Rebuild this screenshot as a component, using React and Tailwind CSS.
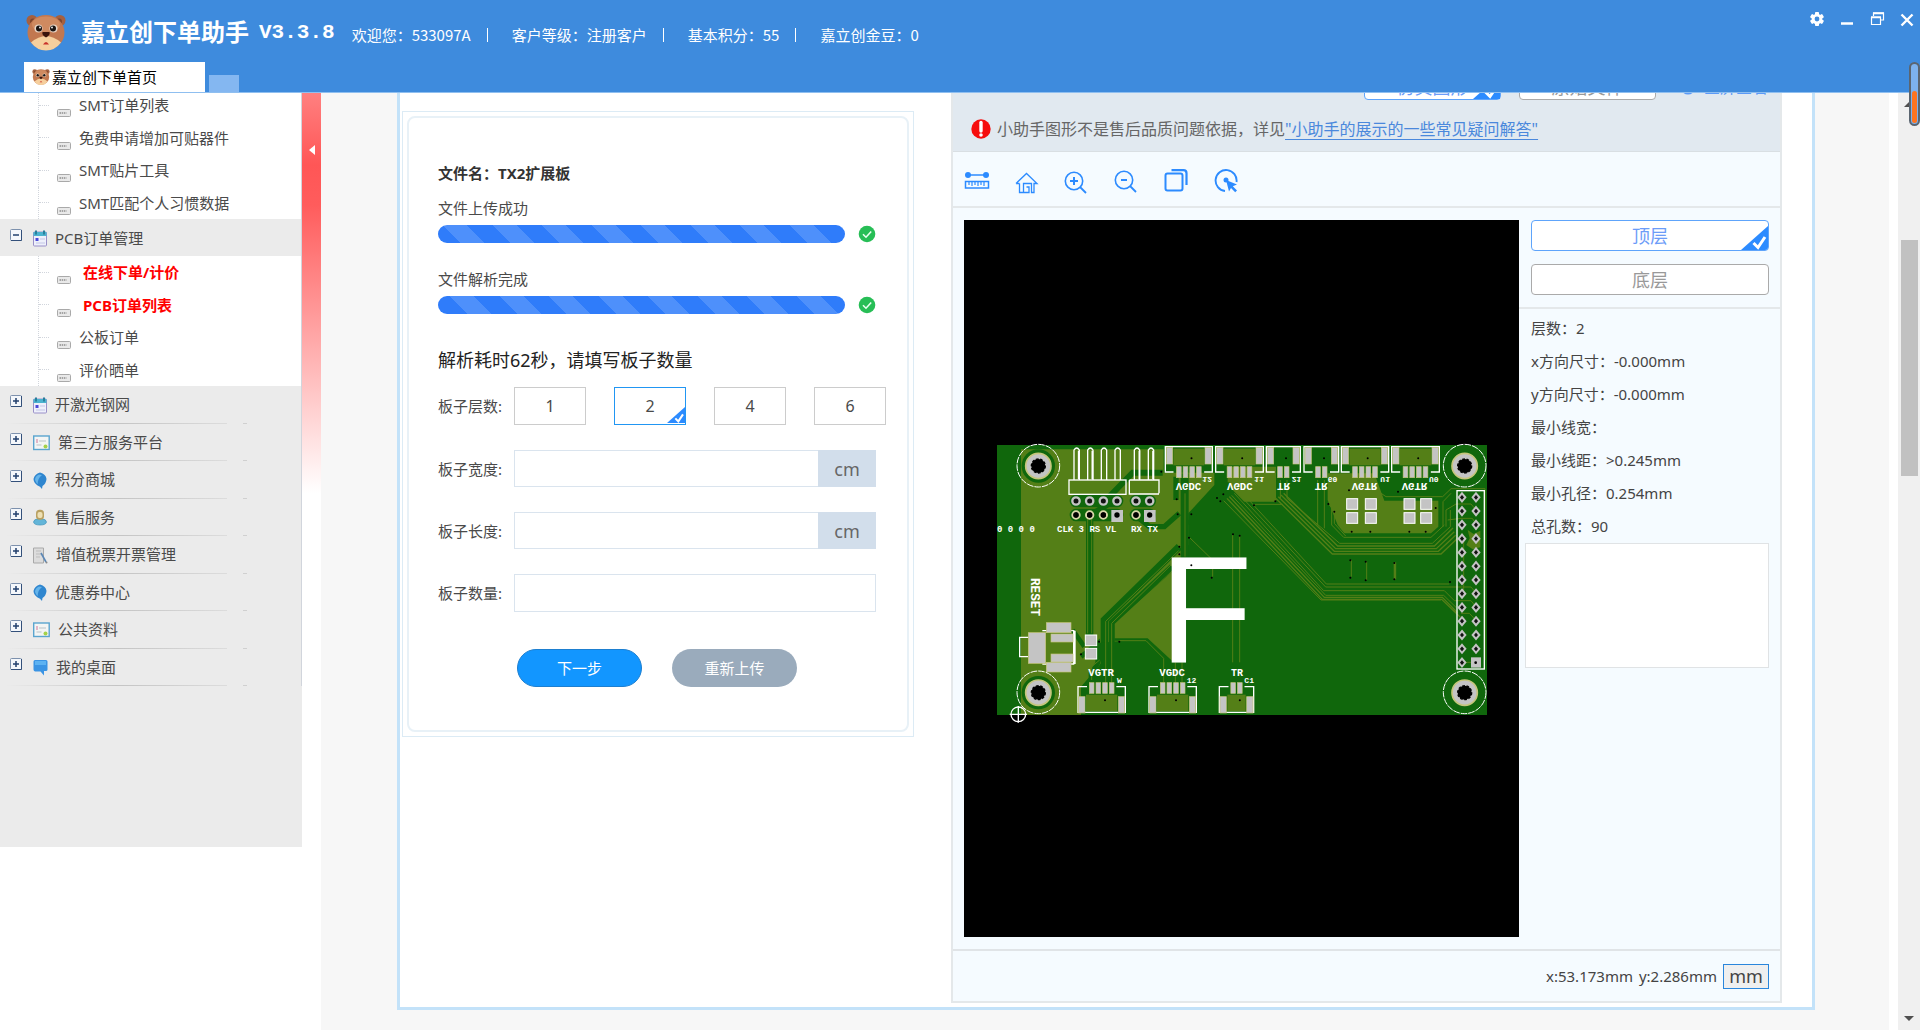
import { useState } from 'react'
import clsx from 'clsx'

const smtItems = ['SMT订单列表', '免费申请增加可贴器件', 'SMT贴片工具', 'SMT匹配个人习惯数据']

const pcbItems = [
  { text: '在线下单/计价', hot: true },
  { text: 'PCB订单列表', hot: true },
  { text: '公板订单' },
  { text: '评价晒单' },
]

const groups = [
  { text: '开激光钢网', icon: 'note' },
  { text: '第三方服务平台', icon: 'card' },
  { text: '积分商城', icon: 'ball' },
  { text: '售后服务', icon: 'user' },
  { text: '增值税票开票管理', icon: 'doc' },
  { text: '优惠券中心', icon: 'ball' },
  { text: '公共资料', icon: 'card' },
  { text: '我的桌面', icon: 'chat' },
]

const userInfo = ['欢迎您：533097A', '客户等级：注册客户', '基本积分：55', '嘉立创金豆：0']

const boardInfo = [
  ['层数：', '2'],
  ['x方向尺寸：', '-0.000mm'],
  ['y方向尺寸：', '-0.000mm'],
  ['最小线宽：', ''],
  ['最小线距：', '>0.245mm'],
  ['最小孔径：', '0.254mm'],
  ['总孔数：', '90'],
]

function Bear({ className }) {
  return (
    <svg viewBox="0 0 40 36" className={className} aria-hidden="true">
      <circle cx="6" cy="6" r="5.5" fill="#a5603f" />
      <circle cx="34" cy="6" r="5.5" fill="#a5603f" />
      <circle cx="7" cy="7" r="3" fill="#7e452c" />
      <circle cx="33" cy="7" r="3" fill="#7e452c" />
      <ellipse cx="20" cy="18" rx="18.5" ry="17.5" fill="#c27850" />
      <ellipse cx="20" cy="10" rx="14" ry="8" fill="#cf8a60" />
      <path d="M5 28 Q20 15 35 28 Q29 36 20 36 Q11 36 5 28Z" fill="#f6cf9d" />
      <circle cx="12.5" cy="14" r="4" fill="#e9d7c8" />
      <circle cx="27.5" cy="14" r="4" fill="#e9d7c8" />
      <circle cx="13" cy="14" r="3" fill="#1b1412" />
      <circle cx="27" cy="14" r="3" fill="#1b1412" />
      <circle cx="14" cy="13" r="0.9" fill="#fff" />
      <circle cx="26" cy="13" r="0.9" fill="#fff" />
      <path d="M16.500 17.500h7q1 3-3.500 5.500q-4.500-2.500-3.500-5.500Z" fill="#3a140c" />
      <path d="M17 30q3-5 6 0Z" fill="#c8302a" />
    </svg>
  )
}

function GroupIcon({ name }) {
  if (name === 'note') {
    return (
      <svg viewBox="0 0 14 17" className="w-3.5 h-[17px]" aria-hidden="true">
        <rect x="0.500" y="2" width="13" height="14" rx="1" fill="#eef0fb" stroke="#9a90c8" />
        <rect x="0.500" y="2" width="13" height="4" fill="#4bb3cf" />
        <path d="M3 0.500v4M11 0.500v4" stroke="#2a7f9c" strokeWidth="2" />
        <rect x="2.500" y="8" width="3" height="3" fill="#4b4ad8" />
        <path d="M7 9h5M3 13h9" stroke="#c3c6e6" />
      </svg>
    )
  }
  if (name === 'card') {
    return (
      <svg viewBox="0 0 17 16" className="w-[17px] h-4" aria-hidden="true">
        <rect x="0.700" y="1" width="15.500" height="13.500" fill="#f3f5f4" stroke="#5aa5cf" strokeWidth="1.400" />
        <path d="M4 4v4" stroke="#d58aa8" strokeWidth="1.200" />
        <path d="M6 6h7M3.500 10h5" stroke="#b9c3c8" />
        <circle cx="12.500" cy="11.500" r="2" fill="#a4d24a" />
      </svg>
    )
  }
  if (name === 'ball') {
    return (
      <svg viewBox="0 0 14 17" className="w-3.5 h-[17px]" aria-hidden="true">
        <path d="M7 0.500Q13 2 13.500 7Q13 12 9.500 14L9 17L7 14.800Q0.500 12 0.500 7Q1.500 2 7 0.500Z" fill="#2f86cf" />
        <path d="M6 2.500Q2 4 2 8Q3 11 5 12Q4 7 9 3Z" fill="#65b4ea" />
      </svg>
    )
  }
  if (name === 'user') {
    return (
      <svg viewBox="0 0 14 17" className="w-3.5 h-[17px]" aria-hidden="true">
        <path d="M0.500 13Q1 10 5 10h4q4 0 4.500 3Q13 16 7 16T0.500 13Z" fill="#63b5d8" stroke="#3f93bb" strokeWidth="0.700" />
        <rect x="3" y="0.800" width="8" height="10" rx="3.500" fill="#b9a162" />
        <rect x="4.500" y="3" width="5" height="6" rx="2" fill="#eee0b4" />
      </svg>
    )
  }
  if (name === 'doc') {
    return (
      <svg viewBox="0 0 15 17" className="w-[15px] h-[17px]" aria-hidden="true">
        <path d="M0.500 1h10v15h-10z" fill="#dcdcdc" stroke="#a9a9a9" />
        <path d="M3 4h5M3 7h5M3 10h4" stroke="#bdbdbd" />
        <path d="M8 6l5 9" stroke="#5b87b5" strokeWidth="1.600" />
        <circle cx="13.500" cy="15.500" r="1" fill="#888" />
      </svg>
    )
  }
  return (
    <svg viewBox="0 0 15 17" className="w-[15px] h-[17px]" aria-hidden="true">
      <path d="M2 1h11q1.500 0 1.500 1.500v8q0 1.500-1.500 1.500h-2v4.500L7.500 12.500H2Q0.500 12 0.500 10.500v-8Q0.500 1 2 1Z" fill="#3a94e4" />
      <path d="M2 2h11v4H2z" fill="#5cb2f2" />
    </svg>
  )
}

function Toggle({ open, label }) {
  return (
    <button aria-label={label} className="shrink-0 mb-1.5">
      <svg viewBox="0 0 12 12" className="block size-3" aria-hidden="true">
        <rect x="0.500" y="0.500" width="11" height="11" rx="1" fill="#f4f7fb" stroke="#7d91ad" />
        <path d="M11.500 1v10.500H1" fill="none" stroke="#33507a" />
        <path d={open ? 'M3 6h6' : 'M3 6h6M6 3v6'} stroke="#22406e" strokeWidth="1.500" />
      </svg>
    </button>
  )
}

function SubItem({ text, hot }) {
  return (
    <li className="flex items-center border-l border-dotted border-gray-300 ml-[38px]">
      <span className="w-2.5 border-t border-dotted border-gray-300" />
      <svg viewBox="0 0 14 8" className="w-3.5 h-2 ml-2 mt-4" aria-hidden="true">
        <rect x="0.500" y="0.500" width="13" height="7" rx="1" fill="#e9e9e9" stroke="#a9a9a9" />
        <path d="M2.500 4h7" stroke="#8d8d8d" strokeWidth="1.500" strokeDasharray="1.500 0.700" />
      </svg>
      <a href="#" className={clsx('whitespace-nowrap', hot ? 'ml-3 font-bold text-[#ff0000]' : 'ml-2 text-[#4a4a4a]')}>
        {text}
      </a>
    </li>
  )
}

function Sidebar() {
  return (
    <aside className="w-[302px] shrink-0 self-start bg-[#ebebeb] text-[15px] leading-5 pb-[161px]">
      <div className="h-[126px] flex items-end overflow-hidden bg-white border-r border-gray-300">
        <ul className="w-full h-[130px] shrink-0 grid auto-rows-fr">
          {smtItems.map((text) => <SubItem key={text} text={text} />)}
        </ul>
      </div>
      <div className="h-[37px] flex items-center pl-2.5 border-r border-gray-300 text-[#4a4a4a]">
        <Toggle open label="PCB订单管理" />
        <span className="ml-[11px] mt-0.5"><GroupIcon name="note" /></span>
        <span className="ml-2">PCB订单管理</span>
      </div>
      <ul className="h-[130px] grid auto-rows-fr bg-white border-r border-gray-300">
        {pcbItems.map((item) => <SubItem key={item.text} {...item} />)}
      </ul>
      <ul className="h-[300px] grid auto-rows-fr border-r border-gray-300 text-[#4a4a4a]">
        {groups.map((g) => (
          <li key={g.text} className="flex flex-col">
            <div className="grow flex items-center pl-2.5">
              <Toggle label={g.text} />
              <span className="ml-[11px] mt-0.5"><GroupIcon name={g.icon} /></span>
              <span className="ml-2">{g.text}</span>
            </div>
            <div className="flex gap-4 pl-1.5">
              <span className="w-[221px] h-px bg-gradient-to-r from-transparent via-[#c4c4c4] to-[#dcdcdc]" />
              <span className="w-1 h-px bg-[#d0d0d0]" />
            </div>
          </li>
        ))}
      </ul>
    </aside>
  )
}

function Header() {
  return (
    <header className="h-[93px] shrink-0 flex flex-col bg-[#3e8bdd] border-b border-[#8fbff0] text-white">
      <div className="h-[62px] flex items-start">
        <Bear className="w-10 h-[37px] ml-[26px] mt-[14px]" />
        <h1 className="flex ml-[15px] mt-[17px] gap-2.5 text-[24px] leading-8 font-bold font-['Liberation_Serif','Noto_Sans_CJK_SC',serif] whitespace-nowrap">
          嘉立创下单助手 <span className="text-[21px] font-['Liberation_Mono',monospace]">V3.3.8</span>
        </h1>
        <ul className="flex ml-[17px] mt-[25px] text-[15px] leading-5 font-['Noto_Sans_CJK_SC',sans-serif]">
          {userInfo.map((text, i) => (
            <li key={text} className="flex items-center whitespace-nowrap">
              {i > 0 && <span className="w-px h-3.5 bg-white ml-4 mr-6" />}
              {text}
            </li>
          ))}
        </ul>
        <div className="ml-auto mr-[5px] mt-[11px] flex gap-3.5">
          <button aria-label="设置" className="size-4">
            <svg viewBox="0 0 16 16" className="size-4" aria-hidden="true">
              <g fill="#fff">
                <rect x="6" y="1" width="4" height="14" rx="0.800" />
                <rect x="6" y="1" width="4" height="14" rx="0.800" transform="rotate(60 8 8)" />
                <rect x="6" y="1" width="4" height="14" rx="0.800" transform="rotate(120 8 8)" />
                <circle cx="8" cy="8" r="5.300" />
              </g>
              <circle cx="8" cy="8" r="2.400" fill="#3e8bdd" />
            </svg>
          </button>
          <button aria-label="最小化" className="size-4">
            <svg viewBox="0 0 16 16" className="size-4" aria-hidden="true"><path d="M2 12.500h12" stroke="#fff" strokeWidth="2.500" /></svg>
          </button>
          <button aria-label="还原" className="size-4">
            <svg viewBox="0 0 16 16" className="size-4" fill="none" stroke="#fff" aria-hidden="true">
              <path d="M4.500 5V2h10v7h-3" strokeWidth="1.200" />
              <path d="M4 2.300h11M2 6.300h10" strokeWidth="2" />
              <path d="M2.500 6v7.500h9V6" strokeWidth="1.200" />
            </svg>
          </button>
          <button aria-label="关闭" className="size-4">
            <svg viewBox="0 0 16 16" className="size-4" aria-hidden="true"><path d="M2.500 3.500l11 11M13.500 3.500l-11 11" stroke="#fff" strokeWidth="2.400" /></svg>
          </button>
        </div>
      </div>
      <nav className="flex items-end pl-6 gap-1">
        <a href="#" className="w-[181px] h-[30px] flex items-center pl-2 bg-white text-black text-[15px] leading-5 whitespace-nowrap">
          <Bear className="w-[18px] h-4 shrink-0" />
          <span className="ml-0.5">嘉立创下单首页</span>
        </a>
        <button aria-label="新标签页" className="w-[30px] h-[17px] bg-[#84b7f1]" />
      </nav>
    </header>
  )
}

function Progress({ text, stripes }) {
  return (
    <div>
      <p>{text}</p>
      <div className="flex items-center gap-[13px] mt-[7px]">
        <div role="progressbar" aria-label={text} aria-valuenow={100} className={clsx('w-[407px] h-[18px] rounded-full', stripes)} />
        <svg viewBox="0 0 18 18" className="size-[18px] shrink-0" aria-hidden="true">
          <circle cx="9" cy="9" r="8.300" fill="#27be56" />
          <path d="M5 9.200l3 3 5.200-5.700" fill="none" stroke="#e9fff0" strokeWidth="1.600" />
        </svg>
      </div>
    </div>
  )
}

// синий уголок с галочкой у выбранной кнопки
function Corner({ className }) {
  return (
    <svg viewBox="0 0 27 24" className={clsx('absolute right-0 bottom-0', className)} aria-hidden="true">
      <path d="M27 0v24H0Z" fill="#2c8bff" />
      <path d="M12.500 17l4.500 4.500L24 11" fill="none" stroke="#fff" strokeWidth="3" />
    </svg>
  )
}

function UploadForm() {
  const [layers, setLayers] = useState(2)

  return (
    <section className="w-[512px] shrink-0 self-start mt-[18px] border border-[#dcebf5] p-1">
      <form
        className="border-2 border-[#e8f1f7] rounded-lg pt-[45px] pl-[29px] pb-[43px] text-[15px] leading-5 text-[#4a4a4a]"
        onSubmit={(e) => e.preventDefault()}
      >
        <p className="font-bold text-[#333]">文件名：TX2扩展板</p>
        <div className="mt-[15px] flex flex-col gap-[26px]">
          <Progress text="文件上传成功" stripes="bg-[repeating-linear-gradient(45deg,#2f7cfa_0_16px,#4e90fb_16px_33px,#2f7cfa_33px_35px)]" />
          <Progress text="文件解析完成" stripes="bg-[repeating-linear-gradient(45deg,#4e90fb_0_3px,#2f7cfa_3px_21px,#4e90fb_21px_35px)]" />
        </div>
        <p className="mt-[34px] text-lg leading-6 text-[#222]">解析耗时62秒，请填写板子数量</p>
        <div className="mt-[15px] flex items-center" role="group" aria-label="板子层数">
          <span className="w-[76px] whitespace-nowrap">板子层数:</span>
          <div className="flex gap-7">
            {[1, 2, 4, 6].map((n) => (
              <button
                key={n}
                type="button"
                aria-pressed={layers === n}
                onClick={() => setLayers(n)}
                className={clsx('relative w-[72px] h-[38px] border bg-white text-base', layers === n ? 'border-[#2196f3]' : 'border-[#ccc]')}
              >
                {n}
                {layers === n && <Corner className="w-[18px] h-[18px]" />}
              </button>
            ))}
          </div>
        </div>
        <div className="mt-[25px] flex flex-col gap-[25px]">
          {[['width', '板子宽度:'], ['length', '板子长度:']].map(([id, label]) => (
            <div key={id} className="flex items-center">
              <label htmlFor={id} className="w-[76px]">{label}</label>
              <input id={id} className="w-[304px] h-[37px] px-2 border border-r-0 border-[#dae4ee] bg-white" />
              <span className="w-[58px] h-[37px] flex items-center justify-center bg-[#d2deeb] text-lg text-[#666]">cm</span>
            </div>
          ))}
          <div className="flex items-center">
            <label htmlFor="count" className="w-[76px]">板子数量:</label>
            <input id="count" className="w-[362px] h-[38px] px-2 border border-[#dae4ee] bg-white" />
          </div>
        </div>
        <div className="mt-[37px] ml-[79px] flex gap-[30px] text-white">
          <button className="w-[125px] h-[38px] rounded-full bg-[#1296ff] border border-[#1d7fd0]">下一步</button>
          <button type="button" className="w-[125px] h-[38px] rounded-full bg-[#9aabbc]">重新上传</button>
        </div>
      </form>
    </section>
  )
}

const range = (n) => Array.from({ length: n }, (_, i) => i)

// разъём у верхнего края платы
function TopConnector({ x, w, pads, pour }) {
  const start = x + w / 2 - (pads * 20) / 2
  return (
    <g>
      {pour && <rect x={x + 24} y="56" width={w - 48} height="50" fill="#547f17" />}
      <path d={`M${start - 6} 126H${x}V50H${x + w}V126H${start + pads * 20 + 6}`} fill="none" stroke="#fff" strokeWidth="4" />
      <rect x={x + 3} y="52" width="19" height="50" fill="#c4c4c4" stroke="#c6c67c" strokeWidth="2" />
      <rect x={x + w - 22} y="52" width="19" height="50" fill="#c4c4c4" stroke="#c6c67c" strokeWidth="2" />
      {range(pads).map((i) => (
        <rect key={i} x={start + i * 20 + 3} y="110" width="14" height="33" fill="#c4c4c4" stroke="#c6c67c" strokeWidth="2" />
      ))}
      <circle cx={x + w / 2 + 8} cy="85" r="3" fill="#000" />
    </g>
  )
}

function BottomConnector({ x, w, pads }) {
  const start = x + w / 2 - pads * 10
  return (
    <g>
      <rect x={x + 24} y="794" width={w - 48} height="50" fill="#547f17" />
      <path d={`M${start - 4} 770H${x}V847H${x + w}V770H${start + pads * 20 + 4}`} fill="none" stroke="#fff" strokeWidth="4" />
      <rect x={x + 2} y="800" width="19" height="49" fill="#c4c4c4" stroke="#c6c67c" strokeWidth="2" />
      <rect x={x + w - 21} y="800" width="19" height="49" fill="#c4c4c4" stroke="#c6c67c" strokeWidth="2" />
      {range(pads).map((i) => (
        <rect key={i} x={start + i * 20 + 3} y="758" width="14" height="32" fill="#c4c4c4" stroke="#c6c67c" strokeWidth="2" />
      ))}
      <circle cx={x + w / 2 + 10} cy="811" r="3" fill="#000" />
    </g>
  )
}

function MountHole({ x, y }) {
  return (
    <g>
      <circle cx={x} cy={y - 1} r="64" fill="none" stroke="#fff" strokeWidth="3" strokeDasharray="20 3" />
      <circle cx={x} cy={y} r="50" fill="#10670c" />
      <circle cx={x} cy={y} r="38" fill="#c4c4c4" stroke="#c6c67c" strokeWidth="5" />
      <circle cx={x} cy={y} r="21" fill="#000" stroke="#000" strokeWidth="4" strokeDasharray="8 5" />
    </g>
  )
}

const flipped = [
  [584, 'VGDC'], [738, 'VGDC'], [888, 'TR'], [1001, 'TR'], [1112, 'VGTR'], [1262, 'VGTR'],
]

const flippedSmall = [
  [664, 142, '12'], [820, 142, '11'], [932, 142, '21'], [1040, 142, '60'], [1198, 142, 'U1'], [1344, 142, 'U0'],
]

function Board() {
  return (
    <svg viewBox="48 45 1470 810" className="w-[490px] shrink-0 overflow-visible" role="img" aria-label="PCB">
      <rect x="48" y="45" width="1470" height="810" fill="#10670c" />

      <g fill="#547f17">
        <path d="M120 58H548V128H700V165L622 250V345L600 375L548 855H120Z" />
        <path d="M740 110H885V215H790L740 165Z" />
        <path d="M1040 130H1180L1210 212H1372V290L1350 310H1090L1070 285L1040 210Z" />
        <path d="M1460 300L1478 312L1498 302V352L1475 358L1456 345L1466 325Z" />
      </g>

      {/* тёмные участки поверх заливки */}
      <path d="M745 165L622 285V400L573 420V855H430V632H400V575L573 425L622 365V270L735 165Z" fill="#10670c" />
      <path d="M573 425L400 578V625H500L573 692Z" fill="#547f17" />
      <g fill="none" stroke="#10670c">
        <path d="M595 350L370 570V760" strokeWidth="22" />
        <path d="M573 410L392 578V760" strokeWidth="18" />
        <path d="M326 265V615" strokeWidth="22" />
        <path d="M611 130V380" strokeWidth="24" />
        <path d="M545 128H455L385 200V220L330 255" strokeWidth="18" />
        <path d="M585 140V210M475 265L505 290H550L595 250" strokeWidth="16" />
        <path d="M640 250L725 165H745" strokeWidth="16" />
        <path d="M275 600L310 650M300 680L350 640V700L330 730V760" strokeWidth="14" />
      </g>
      <path d="M285 213H408M285 255H408M465 213H506M465 255H506" stroke="#10670c" strokeWidth="38" strokeLinecap="round" />
      <path d="M340 640L430 632H495L548 685V855H300V770L360 700Z" fill="#10670c" />

      {/* дорожки */}
      <g fill="none" stroke="#547f17" strokeWidth="3">
        <path d="M593 362L374 574V758M590 385L392 580V758M320 265V610M332 265V610M612 190V380" />
        <path d="M415 632H495L548 685V758M583 697V758M603 697V758M332 750V710L356 690" />
        <path d="M755 315V697M776 315V697M625 322L695 390V440" />
        <path d="M738 205L1024 508H1382L1438 562M745 200L1030 502H1384L1430 548" strokeWidth="4" />
        <path d="M728 212L1020 510H1380M752 196L1034 496H1388L1425 532M760 190L1028 482H1390L1420 512H1470L1484 530M768 186L1034 471H1470L1486 490M776 180L1036 462H1405" />
        <path d="M884 205L1054 372H1380L1430 325M892 200L1060 364H1372L1424 316M900 195L1064 356H1366L1420 305M908 190L1070 348H1360L1416 294" strokeWidth="4" />
        <path d="M820 223H905M918 150V205L1076 340H1354L1408 290V240M898 150V205" />
        <path d="M1010 150V285M1030 150V295M1042 222L1052 232V285L1088 322H1350L1390 285M1060 245V280L1094 318" />
        <path d="M1186 180L1215 200H1385L1410 176H1512V690M1386 290V215L1410 190M1395 290V240L1425 222H1470L1485 240M1400 270L1440 265H1474L1484 280" />
        <path d="M1111 390V440M1157 395V450M1240 397V448M1448 330V480M1440 550H1465L1484 570M1440 697H1470" />
      </g>
      <path d="M1242 397V448" stroke="#547f17" strokeWidth="7" />
      <g fill="#000">
        {[[595, 350], [595, 373], [631, 253], [590, 253], [587, 208], [541, 125], [354, 635], [415, 635], [300, 673], [692, 443], [756, 313], [776, 317], [624, 323], [708, 204], [718, 214], [727, 193], [819, 226], [883, 214], [1042, 222], [1060, 245], [1251, 185], [1104, 181], [1108, 391], [1108, 443], [1154, 395], [1154, 451], [1240, 399], [1240, 448], [1112, 305], [1168, 305], [1285, 305], [1334, 305], [1364, 234], [1407, 456]].map(([x, y]) => (
          <circle key={`${x}-${y}`} cx={x} cy={y} r="3" />
        ))}
      </g>

      {/* штыревые разъёмы */}
      <g fill="none" stroke="#fff" strokeWidth="4">
        <rect x="264" y="150" width="171" height="43" />
        <path d="M445 150H534V190M445 150V192H534" />
        {[287, 328, 369, 410, 468, 510].map((x) => (
          <path key={x} d={`M${x - 8} 150V60Q${x} 48 ${x + 8} 60V150`} />
        ))}
        <path d="M293 62V148M334 62V148M475 62V148M516 62V148" strokeWidth="5" />
      </g>
      {[285, 326, 367, 408, 465, 506].map((x) => (
        <g key={x}>
          <circle cx={x} cy="213" r="11" fill="#111" stroke="#c4c4c4" strokeWidth="7" />
          {x === 408 || x === 506
            ? <rect x={x - 17} y="240" width="35" height="36" fill="#c4c4c4" />
            : <circle cx={x} cy="255" r="11" fill="#111" stroke="#d8d8a8" strokeWidth="6" />}
          <circle cx={x} cy="255" r="8" fill="#000" />
        </g>
      ))}

      <TopConnector x={553} w={141} pads={4} pour />
      <TopConnector x={704} w={143} pads={4} pour />
      <TopConnector x={856} w={102} pads={2} />
      <TopConnector x={969} w={104} pads={2} />
      <TopConnector x={1081} w={142} pads={4} pour />
      <TopConnector x={1232} w={143} pads={4} pour />
      <BottomConnector x={291} w={142} pads={4} />
      <BottomConnector x={504} w={142} pads={4} />
      <BottomConnector x={715} w={103} pads={2} />

      {/* резисторы и кнопка сброса */}
      {[1112, 1168, 1284, 1334].map((x) => (
        <g key={x} fill="#c4c4c4" stroke="#fff" strokeWidth="3">
          <rect x={x - 15} y="206" width="33" height="32" />
          <rect x={x - 15} y="248" width="33" height="32" />
        </g>
      ))}
      <g fill="#c4c4c4" stroke="#fff" strokeWidth="3">
        <rect x="313" y="615" width="34" height="32" />
        <rect x="313" y="655" width="34" height="32" />
      </g>
      <g fill="none" stroke="#fff" strokeWidth="4">
        <path d="M142 622H116V680H142M184 602H280M184 702H280" />
        <path d="M280 602V702" strokeWidth="8" />
      </g>
      <g fill="#c4c4c4" stroke="#c6c67c" strokeWidth="2">
        <rect x="142" y="608" width="52" height="92" />
        <rect x="196" y="578" width="74" height="30" />
        <rect x="210" y="612" width="66" height="24" />
        <rect x="210" y="672" width="66" height="24" />
        <rect x="196" y="697" width="74" height="29" />
      </g>

      {/* гребёнка справа */}
      <rect x="1428" y="182" width="82" height="535" fill="none" stroke="#fff" strokeWidth="4" />
      {range(13).map((i) => (
        <g key={i}>
          <path d={`M1443 ${190 + i * 41.3}l10 12l-10 12l-10-12Z`} fill="#111" stroke="#c4c4c4" strokeWidth="6" />
          {i === 12
            ? <rect x="1470" y="682" width="30" height="31" fill="#c4c4c4" />
            : <path d={`M1485 ${190 + i * 41.3}l10 12l-10 12l-10-12Z`} fill="#111" stroke="#c4c4c4" strokeWidth="6" />}
        </g>
      ))}
      <circle cx="1484" cy="698" r="4" fill="#000" />

      <MountHole x={172} y={108} />
      <MountHole x={1451} y={108} />
      <MountHole x={172} y={788} />
      <MountHole x={1451} y={788} />

      {/* шелкография */}
      <g fill="#fff" className="font-['Liberation_Mono',monospace]" fontWeight="bold">
        {flipped.map(([x, t]) => (
          <text key={x} fontSize="32" transform={`translate(${x} 160) scale(1 -1)`}>{t}</text>
        ))}
        {flippedSmall.map(([x, y, t]) => (
          <text key={x} fontSize="24" transform={`translate(${x} ${y}) scale(1 -1)`}>{t}</text>
        ))}
        <text x="322" y="738" fontSize="32">VGTR</text>
        <text x="535" y="738" fontSize="32">VGDC</text>
        <text x="750" y="738" fontSize="30">TR</text>
        <text x="408" y="760" fontSize="24">W</text>
        <text x="617" y="760" fontSize="24">12</text>
        <text x="790" y="760" fontSize="24">C1</text>
        <text fontSize="38" transform="translate(150 444) rotate(90)">RESET</text>
        <text x="48" y="306" fontSize="27">0 0 0 0</text>
        <text x="228" y="306" fontSize="27">CLK 3 RS VL</text>
        <text x="450" y="306" fontSize="27">RX TX</text>
      </g>

      <text x="535" y="697" fontSize="458" fill="#fff" className="font-['Liberation_Sans',sans-serif]">F</text>
      <circle cx="631" cy="406" r="3" fill="#000" />
      <g fill="none" stroke="#fff" strokeWidth="4">
        <circle cx="112" cy="853" r="22" />
        <path d="M86 853H138M112 828V878" />
      </g>
    </svg>
  )
}

const tools = [
  ['测量', (
    <>
      <path d="M4 6h18" strokeWidth="1.500" />
      <circle cx="4" cy="6" r="3" fill="currentColor" stroke="none" />
      <circle cx="22" cy="6" r="3" fill="currentColor" stroke="none" />
      <path d="M1.500 12.500h23v6.500h-23z" strokeWidth="1.500" />
      <path d="M5 13v3M8 13v4M11 13v3M14 13v4M17 13v3M20 13v4" strokeWidth="1.200" />
    </>
  )],
  ['主页', (
    <path d="M2 14.500L12.500 4.500L23 14.500H20V23.500H17.500V14.500H9.500V23.500H15V18H12.500M5.500 14.500V23.500H9.500M5.500 14.500H2" strokeWidth="1.300" />
  )],
  ['放大', (
    <>
      <circle cx="10" cy="12" r="8.700" strokeWidth="1.600" />
      <path d="M16 18L22 24" strokeWidth="1.800" />
      <path d="M6 12h8M10 8v8" strokeWidth="2" />
    </>
  )],
  ['缩小', (
    <>
      <circle cx="10" cy="11" r="8.700" strokeWidth="1.600" />
      <path d="M16 17L22 23" strokeWidth="1.800" />
      <path d="M7 11h6" strokeWidth="2" />
    </>
  )],
  ['图层', (
    <>
      <rect x="1.500" y="4.500" width="17" height="17" rx="2" strokeWidth="2" />
      <path d="M7.500 1.200H19.500Q22.500 1.200 22.500 4.200V16" strokeWidth="2.200" />
    </>
  )],
  ['选择', (
    <>
      <path d="M11 22A10.500 10.500 0 1 1 22.500 13" strokeWidth="1.900" />
      <path d="M12 11l11 4.500-4.200 1.800 4.200 4.200-1.800 1.700-4.200-4.200-2 3.500Z" fill="currentColor" stroke="none" />
      <circle cx="12" cy="11" r="2.500" fill="currentColor" stroke="none" />
    </>
  )],
]

function Viewer() {
  const [side, setSide] = useState('顶层')

  return (
    <section className="grow min-w-0 flex flex-col border-2 border-t-0 border-[#e4e8ea] bg-[#f5fbff]">
      <div className="h-[59px] flex flex-col justify-end bg-[#e1e9f0] border-b border-[#d9dfe3] text-base">
        <div className="flex justify-end items-end gap-[18px] pr-3 leading-6">
          <button className="relative w-[137px] h-[31px] shrink-0 pt-1 border border-[#5ea4fb] rounded bg-white text-lg leading-6 text-[#6c9cf8]">
            仿真图形
            <Corner className="w-[27px] h-6" />
          </button>
          <button className="w-[137px] h-[31px] shrink-0 pt-1 border border-[#aaa] rounded bg-white text-lg leading-6 text-[#999]">原始文件</button>
          <a href="#" className="w-[94px] h-[31px] pt-1 flex items-center justify-end gap-2 text-[#5b9af7]">
            <svg viewBox="0 0 16 16" className="size-4" fill="none" stroke="currentColor" strokeWidth="2" aria-hidden="true">
              <circle cx="8" cy="8" r="6.500" />
              <circle cx="8" cy="8" r="2" />
            </svg>
            全屏查看
          </a>
        </div>
        <p className="h-[51px] shrink-0 flex items-center pl-[18px] pb-1.5 pt-3 whitespace-nowrap text-[#666] leading-6">
          <svg viewBox="0 0 20 20" className="size-5 mr-1.5" aria-hidden="true">
            <circle cx="10" cy="10" r="9.700" fill="#f60d0d" />
            <path d="M10 3.500v8.500" stroke="#fff" strokeWidth="3.400" strokeLinecap="round" />
            <circle cx="10" cy="16" r="1.800" fill="#fff" />
          </svg>
          小助手图形不是售后品质问题依据，详见
          <a href="#" className="text-[#4a88dc] underline underline-offset-4">"小助手的展示的一些常见疑问解答"</a>
        </p>
      </div>

      <div className="h-14 shrink-0 flex items-center gap-6 pl-[11px] pt-1.5 border-b-2 border-[#e4e8ea] text-[#2c8bff]">
        {tools.map(([label, icon]) => (
          <button key={label} aria-label={label}>
            <svg viewBox="0 0 26 26" className="block size-[26px]" fill="none" stroke="currentColor" aria-hidden="true">{icon}</svg>
          </button>
        ))}
      </div>

      <div className="flex">
        <div className="grow min-w-0 h-[717px] my-3 ml-[11px] pt-[3px] flex items-center justify-center bg-black overflow-hidden">
          <Board />
        </div>
        <div className="w-[261px] shrink-0 pt-3">
          <div className="flex flex-col gap-[13px] pl-3 pr-[11px] pb-3 border-b-2 border-[#e4e8ea]">
            {['顶层', '底层'].map((name) => (
              <button
                key={name}
                aria-pressed={side === name}
                onClick={() => setSide(name)}
                className={clsx(
                  'relative h-[31px] border rounded bg-white text-lg leading-6 overflow-hidden',
                  side === name ? 'border-[#5ea4fb] text-[#6c9cf8]' : 'border-[#aaa] text-[#999]'
                )}
              >
                {name}
                {side === name && <Corner className="w-[27px] h-6" />}
              </button>
            ))}
          </div>
          <dl className="pl-3 pt-[3px] text-[15px] text-[#444]">
            {boardInfo.map(([label, value]) => (
              <div key={label} className="h-[33px] flex items-center">
                <dt>{label}</dt>
                <dd>{value}</dd>
              </div>
            ))}
          </dl>
          <div className="pl-1.5 pr-[11px]">
            <textarea aria-label="备注" className="block w-full h-[125px] resize-none border border-[#e0e3e5] bg-white" />
          </div>
        </div>
      </div>

      <div className="h-[52px] flex items-center justify-end gap-1.5 pr-[11px] border-t-2 border-[#e0e4e7] text-[15px] text-[#444]">
        <span>x:53.173mm</span>
        <span>y:2.286mm</span>
        <button className="w-[46px] h-[25px] flex items-center justify-center border border-[#2a86dc] bg-[#efefef] text-lg">mm</button>
      </div>
    </section>
  )
}

export default function App() {
  return (
    <div className="relative h-screen flex flex-col overflow-hidden bg-white font-['Noto_Sans','Noto_Sans_CJK_SC',sans-serif]">
      <Header />
      <div className="grow min-h-0 flex overflow-hidden">
        <Sidebar />
        <div className="w-[19px] shrink-0 h-[400px] flex justify-center pt-[51px] bg-[linear-gradient(to_bottom,#ff8080_0%,#ff5656_18%,#ff5c5c_28%,#ffffff_100%)]">
          <button aria-label="收起" className="size-3">
            <svg viewBox="0 0 12 12" className="block size-3" aria-hidden="true"><path d="M3 6l6-5v10Z" fill="#fff" /></svg>
          </button>
        </div>
        <main className="grow min-w-0 bg-[#f7f7f7] pl-[76px] pr-[74px]">
          <div className="flex gap-[37px] pl-0.5 pr-[30px] pb-1 bg-white border-[3px] border-t-0 border-[#c3e2f9]">
            <UploadForm />
            <Viewer />
          </div>
        </main>
        <div className="w-[31px] shrink-0 flex justify-end bg-white">
          <div className="w-[22px] flex flex-col items-center bg-[#f0f0f0]">
            <svg viewBox="0 0 10 6" className="w-2.5 h-1.5 mt-2 shrink-0" aria-hidden="true"><path d="M0 6l5-5 5 5Z" fill="#505050" /></svg>
            <div className="w-[17px] h-[236px] mt-[133px] bg-[#c1c1c1]" />
            <svg viewBox="0 0 10 6" className="w-2.5 h-1.5 mt-auto mb-2 shrink-0" aria-hidden="true"><path d="M0 0l5 5 5-5Z" fill="#505050" /></svg>
          </div>
        </div>
      </div>
      <div className="absolute right-0 top-[62px] w-[11px] h-16 flex flex-col p-px border-2 border-[#5b6570] rounded-full bg-[#7db2ee]">
        <div className="mt-auto w-full h-8 rounded-full bg-[#ff7420]" />
      </div>
    </div>
  )
}
